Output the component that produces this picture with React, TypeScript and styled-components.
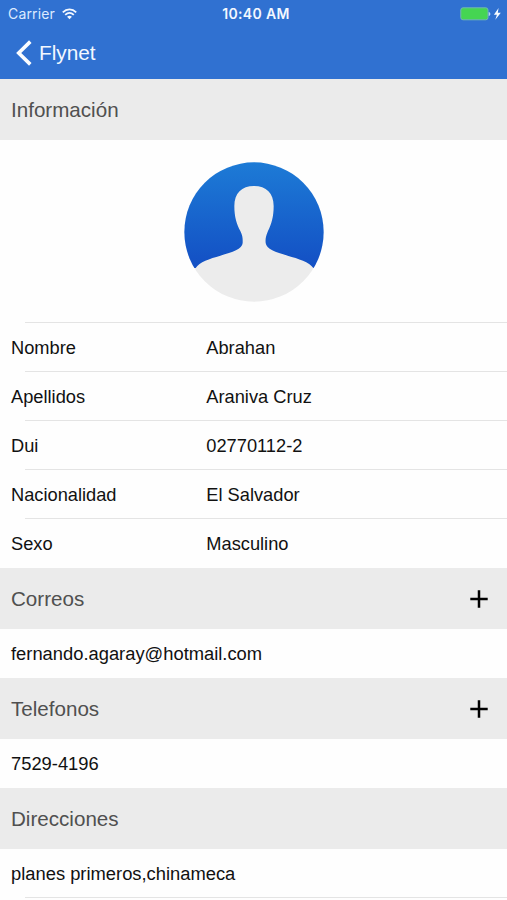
import React from 'react';
import styled, { createGlobalStyle } from 'styled-components';

const GlobalStyle = createGlobalStyle`
  * { box-sizing: border-box; }
  html, body { margin: 0; padding: 0; background: #fff; overflow: hidden; }
`;

const Screen = styled.main`
  display: flex;
  flex-direction: column;
  width: 507px;
  height: 900px;
  overflow: hidden;
  background: #fefefe;
  color: #111;
  font-family: 'Liberation Sans', Arial, sans-serif;
`;

const Header = styled.header`
  flex: none;
  height: 79px;
  background: #3071d1;
  color: #f3f8ff;
`;

const StatusBar = styled.div`
  display: grid;
  grid-template-columns: 1fr auto 1fr;
  align-items: center;
  height: 27px;
  padding: 0 5px 0 8px;
  font-family: Inter, sans-serif;
`;

const Carrier = styled.div`
  display: flex;
  align-items: center;
  gap: 7px;
  font-size: 14px;
  letter-spacing: 0.15px;
  color: #dceaff;
`;

const Clock = styled.div`
  font-size: 14px;
  font-weight: 600;
  letter-spacing: 0.35px;
  padding-left: 2px;
`;

const Power = styled.div`
  display: flex;
  align-items: center;
  justify-content: flex-end;
`;

const BackButton = styled.button`
  display: flex;
  align-items: center;
  gap: 6px;
  height: 51px;
  padding: 0 0 0 16px;
  border: 0;
  background: none;
  color: inherit;
  font: 20.8px 'Liberation Sans', Arial, sans-serif;
`;

const SectionBar = styled.h2`
  display: flex;
  flex: none;
  align-items: center;
  justify-content: space-between;
  height: 61px;
  margin: 0;
  padding: 0 19px 0 11px;
  background: #ebebeb;
  color: #505050;
  font-size: 20.6px;
  font-weight: 400;
`;

const AddButton = styled.button`
  display: flex;
  padding: 0;
  border: 0;
  background: none;
  color: #000;
`;

const PhotoArea = styled.div`
  display: flex;
  flex: none;
  justify-content: center;
  height: 183px;
  padding-top: 21.5px;
`;

const Divider = styled.hr`
  flex: none;
  width: 482px;
  height: 1px;
  margin: -1px 0 0 25px;
  border: 0;
  background: #e4e4e4;
`;

const Row = styled.div`
  display: grid;
  flex: none;
  grid-template-columns: 195.3px 1fr;
  align-items: center;
  height: 49px;
  padding: 1px 0 0 11px;
  font-size: 18.25px;
  white-space: nowrap;
`;

const Entry = styled(Row)`
  grid-template-columns: 1fr;
  font-size: 18.35px;
`;

const WifiIcon = () => (
  <svg width="15" height="12" viewBox="0 0 15 12" fill="none" stroke="#f3f8ff" strokeWidth="1.8">
    <path d="M.8 4.3C4.7.4 10.3.4 14.2 4.3M3.2 6.9c2.6-2.5 6-2.5 8.6 0" />
    <path d="M5.1 8.8c1.4-1.4 3.4-1.4 4.8 0l-2.4 2.5z" fill="#f3f8ff" stroke="none" />
  </svg>
);

const BatteryIcon = () => (
  <svg width="42" height="14" viewBox="0 0 42 14">
    <rect x=".8" y=".8" width="27.2" height="12" rx="2.2" fill="#45d552" stroke="#71b5b5" />
    <path d="M28.7 5c2.2.3 2.2 3.7 0 4z" fill="#b9d5f5" />
    <path d="M38.6 1l-4.7 6.8h3l-1.6 4.9 5.5-7h-3z" fill="#f7fbff" />
  </svg>
);

const BackIcon = () => (
  <svg width="17" height="26" viewBox="0 0 17 26" fill="none" stroke="#fbfdff" strokeWidth="3.6">
    <path d="M14.3 1.6L2.7 13l11.6 11.4" />
  </svg>
);

const PlusIcon = () => (
  <svg width="18" height="18" viewBox="0 0 18 18" stroke="currentColor" strokeWidth="2.5">
    <path d="M9 .3v17.4M.3 9h17.4" />
  </svg>
);

const Avatar = () => (
  <svg width="140" height="140" viewBox="42 34 420 420">
    <defs>
      <linearGradient id="avatarSky" gradientUnits="userSpaceOnUse" x1="0" y1="35" x2="0" y2="352">
        <stop offset="0" stopColor="#1d7bd6" />
        <stop offset="1" stopColor="#134fc4" />
      </linearGradient>
      <clipPath id="avatarDisc">
        <circle cx="252" cy="244" r="209" />
      </clipPath>
    </defs>
    <g clipPath="url(#avatarDisc)">
      <rect x="42" y="34" width="420" height="318" fill="url(#avatarSky)" />
      <path
        fill="#ececec"
        d="M252 106C215 106 193 128 193 166C193 199 200 221 211 241C219 257 218 266 218 277C217 295 188 304 151 315C119 324 88 334 77 352L42 352V460H462V352H430C418 334 385 324 353 315C316 304 289 295 287 277C286 266 287 257 294 241C304 221 311 199 311 166C311 128 289 106 252 106Z"
      />
    </g>
  </svg>
);

const details = [
  ['Nombre', 'Abrahan'],
  ['Apellidos', 'Araniva Cruz'],
  ['Dui', '02770112-2'],
  ['Nacionalidad', 'El Salvador'],
  ['Sexo', 'Masculino'],
];

const Section = ({ title, addable }: { title: string; addable?: boolean }) => (
  <SectionBar>
    <span>{title}</span>
    {addable && (
      <AddButton>
        <PlusIcon />
      </AddButton>
    )}
  </SectionBar>
);

export default function App() {
  return (
    <Screen>
      <GlobalStyle />
      <Header>
        <StatusBar>
          <Carrier>
            Carrier <WifiIcon />
          </Carrier>
          <Clock>10:40 AM</Clock>
          <Power>
            <BatteryIcon />
          </Power>
        </StatusBar>
        <BackButton>
          <BackIcon />
          Flynet
        </BackButton>
      </Header>
      <Section title="Información" />
      <PhotoArea>
        <Avatar />
      </PhotoArea>
      {details.map(([label, value]) => (
        <React.Fragment key={label}>
          <Divider />
          <Row>
            <span>{label}</span>
            <span>{value}</span>
          </Row>
        </React.Fragment>
      ))}
      <Section title="Correos" addable />
      <Entry>fernando.agaray@hotmail.com</Entry>
      <Section title="Telefonos" addable />
      <Entry>7529-4196</Entry>
      <Section title="Direcciones" />
      <Entry>planes primeros,chinameca</Entry>
      <Divider />
    </Screen>
  );
}
